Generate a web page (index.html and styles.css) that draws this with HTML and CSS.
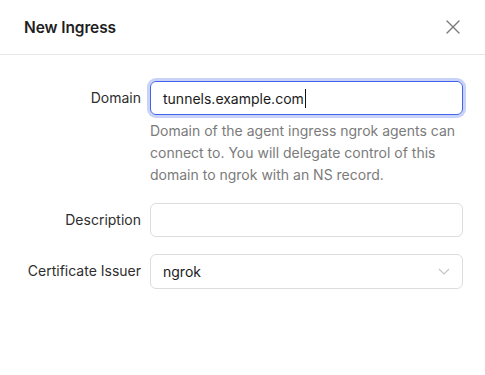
FILE: index.html
```html
<!DOCTYPE html>
<html>
<head>
<meta charset="utf-8">
<link rel="stylesheet" href="styles.css">
</head>
<body>
<div class="modal">
  <header class="modal-header">
    <h2 class="title">New Ingress</h2>
    <button class="close" aria-label="Close">
      <svg width="14" height="14" viewBox="0 0 14 14"><path d="M1 1L13 13M13 1L1 13" stroke="#7a7a7a" stroke-width="1.4" fill="none" stroke-linecap="round"/></svg>
    </button>
  </header>
  <div class="form">
    <label class="label">Domain</label>
    <div class="field">
      <div class="input focused">tunnels.example.com<span class="caret"></span></div>
      <p class="help">Domain of the agent ingress ngrok agents can connect to. You will delegate control of this domain to ngrok with an NS record.</p>
    </div>
    <label class="label">Description</label>
    <div class="field">
      <div class="input"></div>
    </div>
    <label class="label">Certificate Issuer</label>
    <div class="field">
      <div class="input select">
        <span>ngrok</span>
        <svg width="12" height="7" viewBox="0 0 12 7"><path d="M1 1L6 6L11 1" stroke="#c4c4c4" stroke-width="1.1" fill="none"/></svg>
      </div>
    </div>
  </div>
</div>
</body>
</html>
```

FILE: styles.css
```css
* { box-sizing: border-box; }
body {
  margin: 0;
  background: #fff;
  font-family: "Inter", "Noto Sans", sans-serif;
  color: #262626;
}
.modal-header {
  height: 55px;
  border-bottom: 1px solid #e6e6e6;
  display: flex;
  align-items: center;
  justify-content: space-between;
  padding: 0 24px 0 24px;
}
.title {
  margin: 0;
  font-size: 15.5px;
  font-weight: 600;
  color: #1f1f1f;
  letter-spacing: -0.1px;
}
.close {
  border: 0;
  background: none;
  padding: 0;
  width: 14px;
  height: 14px;
  display: flex;
  margin-right: 1px;
}
.form {
  display: grid;
  grid-template-columns: 141px 313px;
  column-gap: 9px;
  row-gap: 17px;
  padding-top: 26px;
}
.label {
  text-align: right;
  font-size: 14px;
  color: #2e2e2e;
  height: 34px;
  line-height: 34px;
  white-space: nowrap;
}
.field { display: flex; flex-direction: column; }
.input {
  height: 34px;
  border: 1px solid #dcdcdc;
  border-radius: 6px;
  padding: 0 12px;
  font-size: 14px;
  color: #1a1a1a;
  display: flex;
  align-items: center;
}
.input.focused {
  border-color: #4263eb;
  box-shadow: 0 0 0 3px #c9d3f8;
}
.select { height: 35px; justify-content: space-between; padding-right: 12px; }
.caret {
  display: inline-block;
  width: 1px;
  height: 19px;
  background: #111;
  margin-left: 1px;
}
.help {
  margin: 5px 0 0 0;
  font-size: 14px;
  line-height: 22px;
  color: #7b7b7b;
}
```
